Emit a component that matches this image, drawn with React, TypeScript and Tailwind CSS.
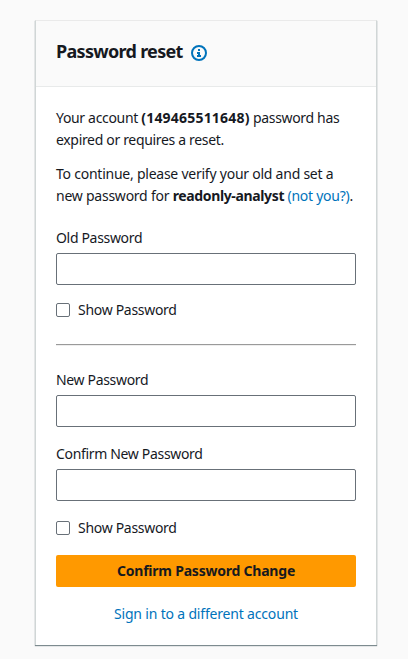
function Field({ label }: { label: string }) {
  return (
    <label className="block">
      <span className="block tracking-[-0.33px]">{label}</span>
      <input type="password" className="mt-1 block h-8 w-full rounded-[2px] border border-[#687078] bg-white px-2 outline-none" />
    </label>
  );
}

function ShowPassword() {
  return (
    <label className="flex items-center gap-2">
      <input type="checkbox" className="h-3.5 w-3.5 appearance-none rounded-[2px] border border-[#687078] bg-white" />
      <span className="tracking-[-0.3px]">Show Password</span>
    </label>
  );
}

function InfoIcon() {
  return (
    <svg className="mt-1 h-4 w-4" viewBox="0 0 16 16" fill="none" stroke="#0073bb" strokeWidth="2">
      <circle cx="8" cy="8" r="7" />
      <path d="M6 8H8V11M6 11H10M7 5H9" />
    </svg>
  );
}

export default function App() {
  return (
    <main className="h-[659px] bg-[#fafafa] pl-[35px] pt-5 font-['Noto_Sans','Open_Sans',sans-serif] text-sm leading-[22px] text-[#16191f]">
      <section className="h-[625px] w-[342px] border-x border-t border-x-[#d0d6d6] border-t-[#eaeaea] bg-white shadow-[0_1px_1px_0_rgba(0,28,36,0.5)]">
        <header className="flex h-[66px] items-center gap-2 border-b border-[#e8eaea] bg-[#fafafa] px-5 pb-[5px]">
          <h1 className="w-[127px] whitespace-nowrap text-lg font-bold tracking-[-0.7px]">Password reset</h1>
          <InfoIcon />
        </header>
        <div className="px-5 pt-5">
          <p className="whitespace-nowrap tracking-[-0.33px]">
            Your account <b className="tracking-[0.2px]">(149465511648)</b> password has
            <br />
            expired or requires a reset.
          </p>
          <p className="mt-3 whitespace-nowrap tracking-[-0.24px]">
            To continue, please verify your old and set a
            <br />
            new password for <b className="tracking-[-0.36px]">readonly-analyst</b>{" "}
            <a className="tracking-[-0.26px] text-[#0073bb]">(not you?)</a>.
          </p>
          <div className="mt-5"><Field label="Old Password" /></div>
          <div className="mt-3.5"><ShowPassword /></div>
          <hr className="my-[23px] h-0.5 border-t border-b border-t-[#9a9a9a] border-b-[#eeeeee]" />
          <Field label="New Password" />
          <div className="mt-4"><Field label="Confirm New Password" /></div>
          <div className="mt-4"><ShowPassword /></div>
          <button className="mt-4 block h-8 w-full rounded-[2px] bg-[#ff9900] font-bold tracking-[-0.22px]">Confirm Password Change</button>
          <a className="mt-4 block text-center tracking-[-0.18px] text-[#0073bb]">Sign in to a different account</a>
        </div>
      </section>
    </main>
  );
}
